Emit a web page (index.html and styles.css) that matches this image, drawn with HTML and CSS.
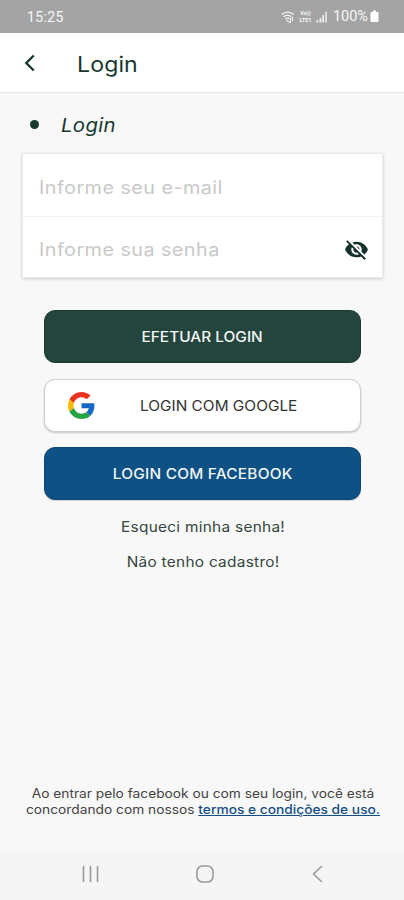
FILE: index.html
```html
<!DOCTYPE html>
<html lang="pt-BR">
<head>
<meta charset="utf-8">
<meta name="viewport" content="width=device-width, initial-scale=1">
<title>Login</title>
<link rel="stylesheet" href="styles.css">
</head>
<body>
<div class="screen">
  <div class="status">
    <span class="clock">15:25</span>
    <div class="indicators">
      <svg class="wifi" width="14" height="14" viewBox="0 0 14 14" fill="none" stroke="#f4f4f4" stroke-width="1.3">
        <path d="M.7 4.5C4.2 1.2 9.2 1.2 12.7 4.5M2.7 6.7c2.2-2 5.4-2 7.6 0M4.6 8.9c1.2-1 2.8-1 4 0"/><path d="M5.2 10l3.6 2.6M9.5 8v5M11.5 7v4" stroke-width="1.1"/>
      </svg>
      <span class="lte"><span>Vo))</span><span>LTE1</span></span>
      <svg class="signal" width="12" height="12" viewBox="0 0 12 12" fill="#ededed">
        <path d="M.5 9h1.8v2.5H.5zM3.5 7h1.8v4.5H3.5zM6.3 4h1.8v7.5H6.3zM9.3.8h1.5v10.7H9.3z"/>
      </svg>
      <span class="percent">100%</span>
      <svg width="9" height="13" viewBox="0 0 9 13" fill="#fff"><path d="M3 .5h3V2h1.2Q8.5 2 8.5 3.3v7.4Q8.5 12 7.2 12H1.8Q.5 12 .5 10.7V3.3Q.5 2 1.8 2H3z"/></svg>
    </div>
  </div>
  <header class="appbar">
    <svg class="back" width="12" height="18" viewBox="0 0 12 18" fill="none" stroke="#17372f" stroke-width="2.4"><path d="M9.8 1.5 2.3 9l7.5 7.5"/></svg>
    <h1 class="title wide-left">Login</h1>
  </header>
  <main class="content">
    <div class="section"><span class="dot"></span><span class="section-name wide-left">Login</span></div>
    <div class="fields">
      <div class="field"><span class="email wide-left">Informe seu e-mail</span></div>
      <div class="field">
        <span class="password wide-left">Informe sua senha</span>
        <svg width="25" height="25" viewBox="0 0 24 24" fill="#14332c"><path d="M12 7c2.76 0 5 2.24 5 5 0 .65-.13 1.26-.36 1.83l2.92 2.92c1.51-1.26 2.7-2.89 3.43-4.75-1.73-4.39-6-7.5-11-7.5-1.4 0-2.74.25-3.98.7l2.16 2.16C10.74 7.13 11.35 7 12 7zM2 4.27l2.28 2.28.46.46C3.08 8.3 1.78 10.02 1 12c1.73 4.39 6 7.5 11 7.5 1.55 0 3.03-.3 4.38-.84l.42.42L19.73 22 21 20.73 3.27 3 2 4.27zM7.53 9.8l1.55 1.55c-.05.21-.08.43-.08.65 0 1.66 1.34 3 3 3 .22 0 .44-.03.65-.08l1.55 1.55c-.67.33-1.41.53-2.2.53-2.76 0-5-2.24-5-5 0-.79.2-1.53.53-2.2zm4.31-.78l3.15 3.15.02-.16c0-1.66-1.34-3-3-3l-.17.01z"/></svg>
      </div>
    </div>
    <div class="actions">
      <div class="button primary"><span class="wide">EFETUAR LOGIN</span></div>
      <div class="button google">
        <svg class="google-logo" width="27" height="27" viewBox="0 0 48 48"><path fill="#ea321f" d="M24 9.5c3.54 0 6.71 1.22 9.21 3.6l6.85-6.85C35.9 2.38 30.47 0 24 0 14.62 0 6.51 5.38 2.56 13.22l7.98 6.19C12.43 13.72 17.74 9.5 24 9.5z"/><path fill="#1768c4" d="M46.98 24.55c0-1.57-.15-3.09-.38-4.55H24v9.02h12.94c-.58 2.96-2.26 5.48-4.78 7.18l7.73 6c4.51-4.18 7.09-10.36 7.09-17.65z"/><path fill="#fbb905" d="M10.53 28.59c-.48-1.45-.76-2.99-.76-4.59s.27-3.14.76-4.59l-7.98-6.19C.92 16.46 0 20.12 0 24c0 3.88.92 7.54 2.56 10.78l7.97-6.19z"/><path fill="#27a343" d="M24 48c6.48 0 11.93-2.13 15.89-5.81l-7.73-6c-2.15 1.45-4.92 2.3-8.16 2.3-6.26 0-11.57-4.22-13.47-9.91l-7.98 6.19C6.51 42.62 14.62 48 24 48z"/></svg>
        <span class="wide-left">LOGIN COM GOOGLE</span>
      </div>
      <div class="button facebook"><span class="wide">LOGIN COM FACEBOOK</span></div>
      <div class="link forgot wide">Esqueci minha senha!</div>
      <div class="link register wide">Não tenho cadastro!</div>
    </div>
    <footer class="terms">
      <div class="wide">Ao entrar pelo facebook ou com seu login, você está</div>
      <div class="wide">concordando com nossos <span class="terms-link">termos e condições de uso.</span></div>
    </footer>
  </main>
  <nav class="navbar">
    <svg width="18" height="18" viewBox="0 0 18 18" stroke="#9b9b9b" stroke-width="1.6"><path d="M1.5 1v16M8.5 1v16M15.5 1v16"/></svg>
    <svg width="18" height="18" viewBox="0 0 18 18" fill="none" stroke="#9b9b9b" stroke-width="1.6"><rect x="1" y="1" width="16" height="16" rx="5.5"/></svg>
    <svg width="18" height="18" viewBox="0 0 18 18" fill="none" stroke="#9b9b9b" stroke-width="1.6"><path d="M13 1 4.5 9l8.5 8"/></svg>
  </nav>
</div>
</body>
</html>
```
FILE: styles.css
```css
* { box-sizing: border-box; }
body { margin: 0; font-family: Inter, "Liberation Sans", sans-serif; color: #17372f; }
.screen { width: 404px; height: 900px; display: flex; flex-direction: column; background: #f8f8f8; white-space: nowrap; }
/* Extended letterforms */
.wide { transform: scaleX(1.1); }
.wide-left { transform: scaleX(1.1); transform-origin: left center; }
.status { height: 33px; flex: none; background: #a4a4a4; color: #f7f7f7; display: flex; align-items: center; justify-content: space-between; padding: 0 25px 0 27px; font: 400 14px/16px Roboto, sans-serif; }
.clock { letter-spacing: .4px; }
.indicators { display: flex; align-items: center; }
.lte { display: flex; flex-direction: column; font: 700 5.5px/7px Roboto, sans-serif; margin-left: 3px; width: 15px; text-align: center; }
.signal { margin: 0 5px 0 3px; }
.percent { margin-right: 2px; font-size: 14.5px; }
.appbar { height: 60px; flex: none; background: #fff; border-bottom: 1px solid #e6e6e6; display: flex; align-items: center; padding-left: 24px; }
.title { margin: 4px 0 0 41px; font-size: 21px; line-height: 26px; font-weight: 400; letter-spacing: .1px; }
.content { flex: 1; display: flex; flex-direction: column; }
.section { height: 60px; display: flex; align-items: center; padding: 3px 0 0 30px; }
.dot { width: 9px; height: 9px; border-radius: 50%; background: #17372f; }
.section-name { margin-left: 22px; font-size: 18.5px; font-style: italic; letter-spacing: .3px; }
.fields { margin: 0 21px 0 22px; height: 125px; background: #fff; border: 1px solid #ebebeb; box-shadow: 0 1px 3px rgba(0,0,0,.18); }
.field { height: 62px; display: flex; align-items: center; justify-content: space-between; padding: 5px 13px 0 16px; color: #c9c9c9; font-size: 18px; letter-spacing: .4px; }
.field + .field { height: 61px; border-top: 1px solid #f1f1f1; padding-top: 4px; }
.actions { display: flex; flex-direction: column; padding: 32px 43px 0 44px; }
.button { height: 53px; border-radius: 11px; display: flex; align-items: center; justify-content: center; font-size: 14px; font-weight: 500; color: #f4f7f6; letter-spacing: .2px; }
.primary { background: #24453d; border: 1px solid #173b31; letter-spacing: 0; }
.google { margin: 16px 0 15px; background: #fff; color: #333; border: 1px solid #cfcfcf; box-shadow: 0 1px 2px rgba(0,0,0,.2); font-weight: 400; letter-spacing: 0; justify-content: flex-start; padding-left: 23px; }
.google-logo { margin-right: 45px; }
.facebook { background: #0d5185; border: 1px solid #114879; box-shadow: 0 1px 1px rgba(0,0,0,.15); }
.link { text-align: center; font-size: 14px; line-height: 18px; color: #35453f; letter-spacing: .25px; padding-left: 1px; }
.forgot { margin-top: 18px; }
.register { margin-top: 17px; }
.terms { margin-top: auto; height: 65px; text-align: center; font-size: 12.5px; line-height: 16px; color: #444; padding-left: 2px; }
.terms-link { color: #124f86; text-decoration: underline; font-weight: 500; }
.navbar { height: 49px; flex: none; background: #f5f5f5; display: flex; align-items: center; justify-content: space-between; padding: 0 77px 3px 82px; }
```
